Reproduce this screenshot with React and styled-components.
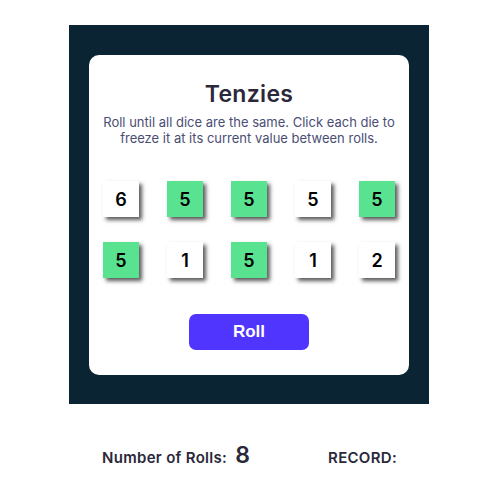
import React, { useState } from 'react'
import styled, { createGlobalStyle } from 'styled-components'

const GlobalStyle = createGlobalStyle`
  body {
    margin: 0;
    background: #ffffff;
    font-family: 'Inter', 'Noto Sans', sans-serif;
  }
`

const Page = styled.div`
  display: flex;
  flex-direction: column;
  align-items: center;
  padding: 25px 0 0 3px;
`

const Board = styled.main`
  width: 360px;
  box-sizing: border-box;
  background: #0b2434;
  padding: 30px 20px 29px;
`

const Card = styled.section`
  background: #ffffff;
  border-radius: 10px;
  padding: 25px 10px 25px;
  display: flex;
  flex-direction: column;
  align-items: center;
`

const Title = styled.h1`
  margin: 0;
  font-size: 23px;
  font-weight: 600;
  color: #2b283a;
  letter-spacing: 0.3px;
`

const Instructions = styled.p`
  margin: 6px 0 0;
  font-size: 13px;
  line-height: 16px;
  color: #4a4e74;
  text-align: center;
`

const DiceGrid = styled.div`
  margin-top: 35px;
  display: grid;
  grid-template-columns: repeat(5, 36px);
  column-gap: 28px;
  row-gap: 25px;
`

const Die = styled.button`
  width: 36px;
  height: 36px;
  border: none;
  padding: 0;
  background: ${(props) => (props.held ? '#59e391' : '#ffffff')};
  box-shadow: 3px 3px 4px rgba(0, 0, 0, 0.65);
  display: flex;
  align-items: center;
  justify-content: center;
  font-family: 'Inter', sans-serif;
  font-size: 18px;
  font-weight: 600;
  color: #000000;
  cursor: pointer;
`

const RollButton = styled.button`
  margin-top: 36px;
  width: 120px;
  height: 36px;
  border: none;
  border-radius: 7px;
  background: #5035ff;
  color: #ffffff;
  font-family: 'Liberation Sans', Arial, sans-serif;
  font-size: 17px;
  font-weight: 700;
  cursor: pointer;
`

const Stats = styled.div`
  width: 360px;
  box-sizing: border-box;
  padding: 0 32px 0 33px;
  margin-top: 37px;
  display: flex;
  align-items: baseline;
  justify-content: space-between;
`

const Stat = styled.p`
  margin: 0;
  display: flex;
  align-items: baseline;
  gap: 8px;
  font-size: 15px;
  font-weight: 600;
  color: #2b283a;
  letter-spacing: 0.3px;
`

const StatValue = styled.span`
  font-size: 23px;
  font-weight: 600;
`

const initialDice = [
  { value: 6, held: false },
  { value: 5, held: true },
  { value: 5, held: true },
  { value: 5, held: false },
  { value: 5, held: true },
  { value: 5, held: true },
  { value: 1, held: false },
  { value: 5, held: true },
  { value: 1, held: false },
  { value: 2, held: false },
]

export default function App() {
  const [dice, setDice] = useState(initialDice)
  const [rolls, setRolls] = useState(8)

  const toggle = (index) => {
    setDice((old) =>
      old.map((die, i) => (i === index ? { ...die, held: !die.held } : die)),
    )
  }

  const roll = () => {
    setDice((old) =>
      old.map((die) =>
        die.held ? die : { ...die, value: Math.ceil(Math.random() * 6) },
      ),
    )
    setRolls((n) => n + 1)
  }

  return (
    <>
      <GlobalStyle />
      <Page>
        <Board>
          <Card>
            <Title>Tenzies</Title>
            <Instructions>
              Roll until all dice are the same. Click each die to
              <br />
              freeze it at its current value between rolls.
            </Instructions>
            <DiceGrid>
              {dice.map((die, i) => (
                <Die key={i} held={die.held} onClick={() => toggle(i)}>
                  {die.value}
                </Die>
              ))}
            </DiceGrid>
            <RollButton onClick={roll}>Roll</RollButton>
          </Card>
        </Board>
        <Stats>
          <Stat>
            Number of Rolls: <StatValue>{rolls}</StatValue>
          </Stat>
          <Stat>RECORD:</Stat>
        </Stats>
      </Page>
    </>
  )
}
